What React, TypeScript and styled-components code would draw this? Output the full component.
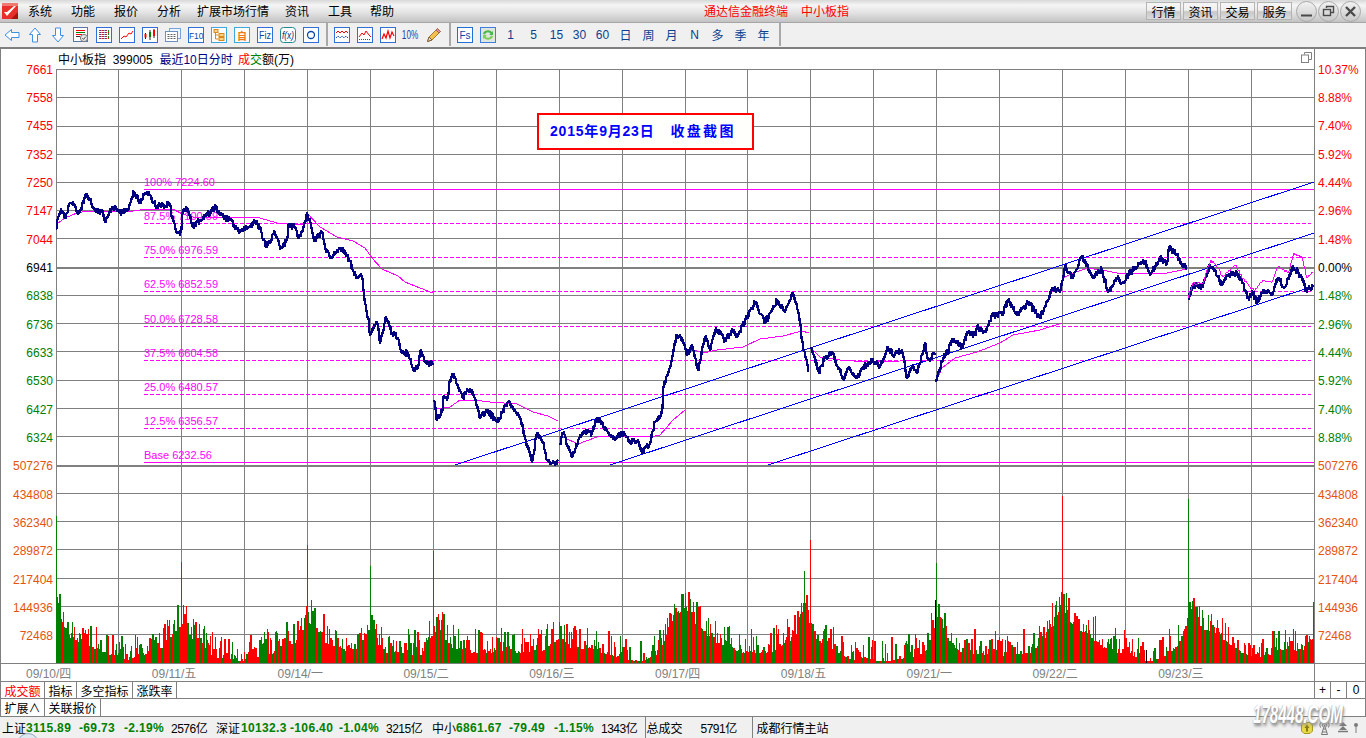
import React from "react";
import styled, { createGlobalStyle } from "styled-components";

const SANS = `"Liberation Sans", "Noto Sans CJK SC", sans-serif`;
const LINE = "#808080";
const RED = "#ff0000";
const GREEN = "#008000";
const ORANGE = "#e4540f";
const NAVY = "#000080";
const MAGENTA = "#ff00ff";

const Global = createGlobalStyle`
  html, body { margin: 0; padding: 0; background: #fff; }
  * { box-sizing: border-box; }
`;

const Screen = styled.div`
  position: relative;
  width: 1366px;
  height: 738px;
  overflow: hidden;
  font: 12px ${SANS};
  color: #000;
  background: #fff;
  display: flex;
  flex-direction: column;
`;

/* ---------- menu bar ---------- */
const MenuBar = styled.div`
  height: 23px;
  display: flex;
  align-items: center;
  padding-left: 2px;
  background: linear-gradient(#d8d8d8 0, #f5f5f5 5px, #e2e2e2 13px, #c2c2c2 22px);
  border-bottom: 1px solid #a6a6a6;
`;
const LogoSvg = styled.svg`
  width: 16px;
  height: 16px;
  flex: none;
  margin-right: 10px;
`;
const MenuItem = styled.span<{ $gap: number }>`
  margin-left: ${(p) => p.$gap}px;
  margin-bottom: 2px;
  white-space: nowrap;
`;
const AppTitle = styled.div`
  position: absolute;
  left: 704px;
  top: 2px;
  color: ${RED};
  display: flex;
  gap: 13px;
`;
const WindowControls = styled.div`
  margin-left: auto;
  display: flex;
  align-items: center;
  gap: 2px;
  padding-right: 5px;
`;
const TopButton = styled.span`
  width: 35px;
  height: 18px;
  display: flex;
  align-items: center;
  justify-content: center;
  border: 1px solid #b4b4b4;
  background: linear-gradient(#f6f6f6, #f0f0f0 45%, #c8c8c8 55%, #dcdcdc);
`;
const RoundButton = styled.span<{ $first?: boolean }>`
  width: 21px;
  height: 21px;
  margin-left: ${(p) => (p.$first ? 2 : -1)}px;
  border-radius: 50%;
  border: 1px solid #a8a8a8;
  background: linear-gradient(#f2f2f2, #c8c8c8);
  display: flex;
  align-items: center;
  justify-content: center;
`;

/* ---------- tool bar ---------- */
const ToolBar = styled.div`
  height: 26px;
  display: flex;
  align-items: center;
  background: #f0f0f0;
  border-bottom: 2px solid ${LINE};
  padding-bottom: 1px;
`;
const ToolCell = styled.span`
  width: 23px;
  height: 16px;
  flex: none;
  display: flex;
  align-items: center;
  justify-content: center;
`;
const ToolIcon = styled.svg`
  width: 16px;
  height: 16px;
  display: block;
`;
const ToolWord = styled.span`
  display: block;
  flex: none;
  color: #1346b4;
  font-size: 12px;
  transform: scaleX(0.68);
`;
const ToolSep = styled.span`
  width: 2px;
  height: 23px;
  flex: none;
  margin: 0 2px 0 4px;
  background: #a8a8a8;
`;
const Period = styled.span`
  width: 23px;
  flex: none;
  text-align: center;
  color: #0b3f8f;
`;

/* ---------- chart panel ---------- */
const ChartPanel = styled.div`
  display: grid;
  grid-template-columns: 55px 1259px 50px;
  grid-template-rows: 20px 594px;
  border-left: 1px solid ${LINE};
  border-right: 1px solid ${LINE};
`;
const Axis = styled.div<{ $side: "left" | "right" }>`
  grid-row: 1 / 3;
  padding-top: 6.83px;
  display: flex;
  flex-direction: column;
  align-items: ${(p) => (p.$side === "left" ? "flex-end" : "flex-start")};
  padding-left: ${(p) => (p.$side === "left" ? 0 : 3)}px;
  padding-right: ${(p) => (p.$side === "left" ? 3 : 0)}px;
`;
const AxisLabel = styled.span<{ $color: string }>`
  height: 28.33px;
  line-height: 28.33px;
  flex: none;
  color: ${(p) => p.$color};
  white-space: nowrap;
`;
const TitleRow = styled.div`
  grid-column: 2;
  grid-row: 1;
  display: flex;
  align-items: center;
  padding: 0 2px 1px;
  white-space: pre;
  border-right: 1px solid ${LINE};
`;
const Tint = styled.span<{ $color: string; $gap?: number }>`
  color: ${(p) => p.$color};
  margin-left: ${(p) => p.$gap ?? 0}px;
`;
const RestoreIcon = styled.svg`
  width: 11px;
  height: 11px;
  margin-left: auto;
  margin-bottom: 3px;
`;
const Plot = styled.svg`
  grid-column: 2;
  grid-row: 2;
  display: block;
  width: 1259px;
  height: 594px;
`;
const PlotLabel = styled.text`
  font: 11px ${SANS};
  fill: ${MAGENTA};
`;
const Notice = styled.div`
  position: absolute;
  left: 537px;
  top: 113px;
  width: 217px;
  height: 37px;
  border: 2px solid ${RED};
  background: #fffffc;
  color: #0000ff;
  font-weight: 700;
  font-size: 14px;
  display: flex;
  align-items: center;
  padding: 0 0 3px 11px;
  white-space: nowrap;
`;
const NoticeDate = styled.span`
  letter-spacing: 0.8px;
`;
const NoticeWords = styled.span`
  margin-left: 16px;
  letter-spacing: 2.3px;
`;

/* ---------- lower rows ---------- */
const DateRow = styled.div`
  height: 19px;
  display: flex;
  border-top: 1px solid ${LINE};
  border-bottom: 1px solid ${LINE};
  border-left: 1px solid ${LINE};
  border-right: 1px solid ${LINE};
`;
const DateTrack = styled.div`
  width: 1313px;
  flex: none;
  display: flex;
  align-items: center;
  padding: 0 0 1px 25px;
  overflow: hidden;
`;
const DateLabel = styled.span`
  width: 125.8px;
  flex: none;
  color: ${LINE};
  white-space: nowrap;
`;
const RightCell = styled.div`
  flex: 1;
  border-left: 1px solid ${LINE};
`;
const TabRow = styled.div<{ $h: number }>`
  height: ${(p) => p.$h}px;
  display: flex;
  border-left: 1px solid ${LINE};
  border-right: 1px solid ${LINE};
  border-bottom: 1px solid ${LINE};
`;
const Tab = styled.span<{ $w: number; $on?: boolean }>`
  width: ${(p) => p.$w}px;
  flex: none;
  display: flex;
  align-items: center;
  justify-content: center;
  border-right: 1px solid ${LINE};
  color: ${(p) => (p.$on ? RED : "#000")};
`;
const ZoomGroup = styled.div`
  margin-left: auto;
  display: flex;
  border-left: 1px solid ${LINE};
`;
const ZoomCell = styled.span<{ $w: number; $last?: boolean }>`
  width: ${(p) => p.$w}px;
  display: flex;
  align-items: center;
  justify-content: center;
  border-right: ${(p) => (p.$last ? "none" : `1px solid ${LINE}`)};
`;

/* ---------- status bar ---------- */
const StatusBar = styled.div`
  position: relative;
  height: 21px;
  display: flex;
  align-items: center;
  padding-left: 2px;
  padding-right: 8px;
  background: #f0f0f0;
  overflow: hidden;
  white-space: nowrap;
`;
const StatusCell = styled.span<{ $w: number; $kind?: "num" | "vol"; $pad?: number }>`
  width: ${(p) => p.$w}px;
  flex: none;
  padding-left: ${(p) => p.$pad ?? 0}px;
  color: ${(p) => (p.$kind === "num" ? GREEN : "#000")};
  font-weight: ${(p) => (p.$kind === "num" ? 700 : 400)};
  letter-spacing: ${(p) => (p.$kind === "num" ? "0.35px" : p.$kind === "vol" ? "-0.5px" : "0")};
`;
const StatusSep = styled.span`
  width: 1px;
  height: 21px;
  flex: none;
  background: ${LINE};
`;
const StatusIcons = styled.div`
  margin-left: auto;
  display: flex;
  align-items: center;
`;
const StatusIcon = styled.svg<{ $gap: number }>`
  display: block;
  margin-left: ${(p) => p.$gap}px;
`;
const Dome = styled.span`
  position: absolute;
  left: 17px;
  top: 16px;
  width: 22px;
  height: 22px;
  border-radius: 50%;
  border: 1px solid #8fa6c4;
  background: #dfe7f1;
`;
const Watermark = styled.div`
  position: absolute;
  left: 1253px;
  top: 699px;
  font: italic 700 26px "Liberation Sans", sans-serif;
  color: #fff;
  transform-origin: 0 0;
  transform: scaleX(0.58);
  white-space: nowrap;
  text-shadow: 1px 1px 1px #9a9a9a, 2px 3px 4px #8a8a8a, -1px 0 1px #c8c8c8;
`;

/* ---------- data ---------- */
const LEFT = [
  ["7661", RED], ["7558", RED], ["7455", RED], ["7352", RED], ["7250", RED], ["7147", RED], ["7044", RED],
  ["6941", "#000"], ["6838", GREEN], ["6736", GREEN], ["6633", GREEN], ["6530", GREEN], ["6427", GREEN], ["6324", GREEN],
  ["507276", ORANGE], ["434808", ORANGE], ["362340", ORANGE], ["289872", ORANGE], ["217404", ORANGE], ["144936", ORANGE], ["72468", ORANGE],
];
const RIGHT = [
  ["10.37%", RED], ["8.88%", RED], ["7.40%", RED], ["5.92%", RED], ["4.44%", RED], ["2.96%", RED], ["1.48%", RED],
  ["0.00%", "#000"], ["1.48%", GREEN], ["2.96%", GREEN], ["4.44%", GREEN], ["5.92%", GREEN], ["7.40%", GREEN], ["8.88%", GREEN],
  ["507276", ORANGE], ["434808", ORANGE], ["362340", ORANGE], ["289872", ORANGE], ["217404", ORANGE], ["144936", ORANGE], ["72468", ORANGE],
];
const H_LINES = [69, 97, 126, 154, 182, 210, 238, 295, 323, 351, 380, 408, 436, 493, 521, 549, 578, 606, 634];
const V_LINES = [56, 118, 181, 244, 307, 370, 433, 496, 559, 622, 685, 747, 810, 873, 936, 999, 1062, 1125, 1188, 1251, 1314];
const FIB = [
  ["100% 7224.60", 189, true], ["87.5% 7100.59", 223, false], ["75.0% 6976.59", 257, false], ["62.5% 6852.59", 291, false],
  ["50.0% 6728.58", 326, false], ["37.5% 6604.58", 360, false], ["25.0% 6480.57", 394, false], ["12.5% 6356.57", 428, false],
  ["Base 6232.56", 462, true],
] as const;

type P = [number, number];
const NAVY_SEGS: P[][] = [
  [[56,230],[57,220],[60,212],[63,212],[65,218],[70,203],[75,205],[77,212],[80,212],[86,194],[90,200],[93,208],[97,212],[102,210],[105,222],[109,213],[115,206],[120,213],[127,211],[130,203],[134,192],[140,202],[145,193],[150,195],[154,203],[157,207],[163,205],[170,204],[172,218],[177,233],[181,232],[183,210],[188,210],[193,227],[200,220],[207,215],[216,206],[220,215],[230,220],[240,232],[248,227],[255,222],[260,227],[266,247],[275,233],[281,248],[287,240],[288,225],[295,227],[298,238],[303,230],[307,213],[312,230],[314,241],[322,233],[325,247],[330,258],[340,248],[347,255],[353,270],[357,278],[362,277],[365,303],[368,317],[370,335],[377,322],[380,343],[386,317],[392,333],[398,338],[402,353],[408,353],[413,369],[418,367],[421,350],[425,362],[433,365]],
  [[434,400],[437,420],[442,412],[443,397],[448,397],[450,380],[453,375],[457,385],[463,398],[468,390],[473,393],[480,418],[487,410],[497,422],[508,402],[520,418],[525,438],[532,462],[537,433],[543,443],[547,460],[555,465],[558,460]],
  [[560,445],[563,433],[572,457],[582,433],[592,433],[597,418],[607,430],[615,440],[622,432],[630,442],[638,440],[642,453],[650,443],[655,422],[662,413],[663,387],[670,367],[677,335],[682,338],[687,355],[692,345],[698,370],[705,337],[710,350],[716,328],[725,340],[733,330],[737,337],[747,317],[755,302],[765,323],[777,300],[785,312],[793,293],[798,310],[802,340],[804,350],[809,372]],
  [[811,347],[819,373],[825,357],[833,353],[837,365],[844,380],[848,368],[857,378],[863,367],[872,360],[880,367],[888,347],[893,355],[898,352],[902,350],[907,378],[913,365],[917,373],[925,343],[928,360],[935,355]],
  [[936,382],[942,362],[953,340],[962,347],[968,332],[975,335],[977,327],[985,332],[992,315],[1002,315],[1008,300],[1018,315],[1028,302],[1040,318],[1047,302],[1052,288],[1060,292],[1065,267],[1073,278],[1082,256],[1092,277],[1102,270],[1108,292],[1117,278],[1122,283],[1135,267],[1145,262],[1150,275],[1160,258],[1167,263],[1169,247],[1177,255],[1182,265],[1187,267]],
  [[1188,300],[1193,285],[1202,287],[1210,265],[1215,270],[1222,285],[1228,275],[1237,273],[1243,283],[1248,298],[1253,293],[1257,303],[1263,290],[1272,295],[1278,278],[1285,287],[1293,266],[1302,277],[1306,290],[1313,287]],
];
const MAG_SEGS: P[][] = [
  [[56,230],[58,223],[65,218],[77,213],[88,211],[133,211],[147,209],[173,209],[182,214],[197,218],[213,217],[230,217],[260,218],[277,223],[303,225]],
  [[307,213],[320,227],[337,237],[353,241],[365,248],[372,258],[382,269],[398,276],[405,282],[420,288],[433,293]],
  [[433,410],[437,409],[450,407],[460,400],[473,400],[490,402],[517,404],[533,412],[548,416],[558,421]],
  [[559,436],[565,438],[578,444],[597,437],[617,436],[650,437],[660,435],[673,420],[685,410]],
  [[685,357],[690,350],[697,351],[703,353],[717,350],[743,347],[760,339],[783,336],[802,331],[809,333]],
  [[810,347],[820,357],[840,360],[867,362],[900,361],[933,360]],
  [[936,382],[942,368],[955,358],[977,352],[1000,343],[1013,335],[1040,330],[1062,323]],
  [[1063,278],[1073,273],[1088,268],[1107,271],[1117,273],[1167,273],[1187,269]],
];
const MAG_LAST: P[] = [[1188,298],[1193,283],[1203,283],[1211,260],[1217,267],[1223,277],[1235,265],[1243,278],[1250,287],[1255,290],[1263,280],[1272,282],[1278,267],[1288,273],[1294,253],[1302,258],[1307,278],[1313,272]];

const rng = (seed: number) => () => {
  seed = (seed + 0x6d2b79f5) | 0;
  let t = Math.imul(seed ^ (seed >>> 15), 1 | seed);
  t = (t + Math.imul(t ^ (t >>> 7), 61 | t)) ^ t;
  return ((t ^ (t >>> 14)) >>> 0) / 4294967296;
};

const jag = (pts: P[], amp: number, seed: number, perPx: number) => {
  const r = rng(seed);
  const out: string[] = [];
  for (let i = 0; i < pts.length - 1; i++) {
    const [x0, y0] = pts[i];
    const [x1, y1] = pts[i + 1];
    const n = Math.max(1, Math.round((x1 - x0) * perPx));
    for (let k = 0; k < n; k++) {
      const x = x0 + ((x1 - x0) * k) / n;
      const y = y0 + ((y1 - y0) * k) / n + (k === 0 ? 0 : (r() - 0.5) * amp);
      out.push(`${Math.round(x)},${Math.round(y)}`);
    }
  }
  const e = pts[pts.length - 1];
  out.push(`${e[0]},${e[1]}`);
  return out.join(" ");
};
const straight = (pts: P[]) => pts.map((p) => p.join(",")).join(" ");

const ENV: P[] = [[56,600],[70,625],[90,635],[110,642],[125,648],[135,645],[150,640],[165,635],[175,618],[181,612],[190,625],[200,635],[215,645],[240,650],[255,645],[275,640],[295,630],[305,612],[312,610],[325,630],[345,640],[360,635],[368,622],[372,625],[385,640],[405,640],[420,645],[433,620],[438,618],[450,635],[470,640],[496,640],[540,640],[559,625],[575,640],[600,640],[640,650],[660,640],[670,610],[685,595],[695,612],[715,630],[740,640],[770,640],[795,625],[803,600],[815,625],[840,645],[880,650],[910,645],[925,640],[936,610],[945,625],[960,640],[1000,643],[1030,640],[1045,625],[1055,610],[1062,585],[1066,605],[1075,615],[1090,625],[1110,640],[1125,640],[1150,650],[1170,640],[1180,630],[1186,610],[1190,600],[1200,615],[1220,625],[1240,640],[1260,645],[1275,640],[1290,635],[1300,640],[1313,625]];
const envAt = (x: number) => {
  for (let i = 0; i < ENV.length - 1; i++) {
    if (x <= ENV[i + 1][0]) {
      const t = (x - ENV[i][0]) / (ENV[i + 1][0] - ENV[i][0]);
      return ENV[i][1] + (ENV[i + 1][1] - ENV[i][1]) * t;
    }
  }
  return 640;
};
type Bar = { x: number; w: number; top: number; c: string };
const BARS: Bar[] = (() => {
  const r = rng(20150923);
  const bars: Bar[] = [];
  let x = 56;
  while (x < 1314) {
    const w = Math.min(r() < 0.75 ? 1 : 2, 1314 - x);
    const rise = Math.pow(r(), 2) * 26;
    const top = Math.min(661, Math.round(envAt(x) + 13 - rise));
    bars.push({ x, w, top, c: r() < 0.62 ? RED : GREEN });
    x += w;
  }
  const spikes: [number, number, string][] = [
    [56,516,GREEN],[181,562,RED],[307,545,RED],[370,566,GREEN],[433,551,GREEN],[559,622,GREEN],[685,593,RED],
    [804,571,GREEN],[810,540,RED],[936,563,GREEN],[1062,496,RED],[1188,499,GREEN],[1313,602,GREEN],[935,600,"#000"],[1146,650,"#000"],
  ];
  spikes.forEach(([sx, top, c]) => bars.push({ x: sx, w: 1, top, c }));
  return bars;
})();

const NAVY_PATHS = NAVY_SEGS.map((s, i) => jag(s, 6, 11 + i, 1.6));
const MAG_LAST_PATH = jag(MAG_LAST, 3, 77, 1);

/* ---------- drawings ---------- */
const F = { blue: "#2f6fd6", ink: "#0a46a8", arrow: "#3f8fe4" };
const Frame = ({ c = F.blue }: { c?: string }) => <rect x=".5" y=".5" width="15" height="15" fill="#fff" stroke={c} />;
const tt = { fontFamily: "Liberation Sans, sans-serif", fontSize: 10 };

const ICONS: React.ReactNode[] = [
  <path key="l" d="M1 8 7.5 2.5V5.5H15v5H7.5v3z" fill="#fff" stroke={F.arrow} />,
  <path key="u" d="M8 1 13.5 7.5H10.5V15h-5V7.5H2.5z" fill="#fff" stroke={F.arrow} />,
  <path key="d" d="M8 15 13.5 8.5H10.5V1h-5V8.5H2.5z" fill="#fff" stroke={F.arrow} />,
  <g key="rp"><rect x=".5" y=".5" width="14" height="14" fill="#fff" stroke="#5577aa" /><path d="M3 3.5h9" stroke={RED} /><path d="M3 5.5h9" stroke={GREEN} /><path d="M3 7.5h6" stroke={RED} /><path d="M3 9.5h4" stroke="#333" /><circle cx="11" cy="11" r="3.6" fill="#e8e8e8" stroke="#777" /><path d="M9.3 11l1.3 1.4 2-2.6" fill="none" stroke="#555" /></g>,
  <g key="gr"><Frame /><path d="M3 3.5h10M3 5.5h10M3 7.5h10M3 9.5h10M3 11.5h10" stroke="#c22" strokeDasharray="2 1" /><path d="M5 3v9M9 3v9" stroke="#1144cc" strokeDasharray="1 1" /><path d="M12.5 3v9" stroke="#1a8a1a" strokeDasharray="2 1" /></g>,
  <g key="ln"><Frame /><path d="M2 12 5 9 7 10 10 6 12 7 14 4" fill="none" stroke={RED} /></g>,
  <g key="cd"><Frame /><path d="M3.5 6v6M8 3v10M12 2v9" stroke="#222" /><rect x="2.5" y="7" width="2" height="3.5" fill={RED} /><rect x="7" y="5" width="2" height="5" fill={GREEN} /><rect x="11" y="3" width="2" height="6" fill={RED} /></g>,
  <g key="wn"><rect x="4.5" y="1.5" width="11" height="10" fill="#eef4fb" stroke="#7aa3d8" /><rect x=".5" y="4.5" width="12" height="10" fill="#fff" stroke="#6b8fbf" /><path d="M2.5 7.5h8M2.5 9.5h8M2.5 11.5h8" stroke="#666" strokeDasharray="2 1" /></g>,
  <g key="f10"><Frame /><text x=".9" y="11.5" style={{ ...tt, fontSize: 8.4, fill: F.ink }}>F10</text></g>,
  <g key="tr"><Frame c="#3fa6e0" /><rect x="3" y="2.5" width="4" height="3" fill="#fbd38a" stroke="#d98a1a" /><rect x="8" y="6.5" width="5" height="3" fill="#fbd38a" stroke="#d98a1a" /><rect x="8" y="10.5" width="5" height="3" fill="#fbd38a" stroke="#d98a1a" /><path d="M4.5 6v6h3M4.5 8h3" fill="none" stroke="#d98a1a" /></g>,
  <g key="zx"><Frame c="#3fa6e0" /><text x="3" y="12.5" style={{ fontFamily: "Noto Sans CJK SC, sans-serif", fontSize: 10, fill: "#ee7a1c", fontWeight: 700 }}>自</text></g>,
  <g key="fiz"><Frame /><text x="2" y="12" textLength="12" lengthAdjust="spacingAndGlyphs" style={{ ...tt, fill: F.ink }}>Fiz</text></g>,
  <g key="fx"><rect x=".5" y=".5" width="15" height="15" rx="3" fill="#fff" stroke="#1e8a8a" /><text x="2" y="12" textLength="12" lengthAdjust="spacingAndGlyphs" style={{ ...tt, fill: "#0a2f7c", fontStyle: "italic" }}>f(x)</text></g>,
  <g key="o"><Frame /><circle cx="8" cy="8" r="3.5" fill="none" stroke={F.ink} strokeWidth="1.3" /></g>,
];
const ICONS2: React.ReactNode[] = [
  <g key="w"><Frame /><path d="M2 6l2-2 2 2 2-2 2 2 2-2 2 2" fill="none" stroke={RED} /><path d="M2 11l2-2 2 2 2-2 2 2 2-2 2 2" fill="none" stroke="#1144cc" strokeDasharray="2 1" /></g>,
  <g key="m"><Frame /><path d="M2 10 5 6l2 2 2-4 3 4 2 2" fill="none" stroke={RED} /><path d="M2 12.5h12" stroke={RED} strokeDasharray="1 1" /></g>,
  <g key="z"><Frame /><path d="M2 12 4 7l2 4 2-7 2 7 2-6 2 4" fill="none" stroke={RED} strokeWidth="1.2" /></g>,
];
const Pencil = () => (
  <ToolIcon viewBox="0 0 16 16"><path d="M11.5 1.5 14.5 4.5 6 13 1.5 14.5 3 10z" fill="#f1c04e" stroke="#a67c2a" /><path d="M11.5 1.5 14.5 4.5 13 6 10 3z" fill="#e89090" stroke="#a06060" /><path d="M1.5 14.5 3 10 6 13z" fill="#eadcc0" stroke="#806040" /></ToolIcon>
);

const MENUS: [string, number][] = [["系统", 0], ["功能", 19], ["报价", 19], ["分析", 19], ["扩展市场行情", 16], ["资讯", 16], ["工具", 19], ["帮助", 18]];
const PERIODS = ["1", "5", "15", "30", "60", "日", "周", "月", "N", "多", "季", "年"];
const DATES = ["09/10/四", "09/11/五", "09/14/一", "09/15/二", "09/16/三", "09/17/四", "09/18/五", "09/21/一", "09/22/二", "09/23/三"];
const STATUS: [string, number, ("num" | "vol")?][] = [
  ["上证", 24], ["3115.89", 53, "num"], ["-69.73", 45, "num"], ["-2.19%", 47, "num"], ["2576亿", 45, "vol"],
  ["深证", 25], ["10132.3", 49, "num"], ["-106.40", 49, "num"], ["-1.04%", 47, "num"], ["3215亿", 46, "vol"],
  ["中小", 24], ["6861.67", 53, "num"], ["-79.49", 45, "num"], ["-1.15%", 47, "num"], ["1343亿", 43.5, "vol"],
];

export default function App() {
  return (
    <Screen>
      <Global />
      <MenuBar>
        <LogoSvg viewBox="0 0 16 16">
          <rect width="16" height="16" fill="#e8302a" />
          <path d="M0 0h16v3H0z" fill="#f07a70" />
          <path d="M2 9l3 4 9-10-2 0-7 6z" fill="#fff" />
          <path d="M9 16l7-7v7z" fill="#a81410" />
        </LogoSvg>
        {MENUS.map(([m, g]) => (
          <MenuItem key={m} $gap={g}>{m}</MenuItem>
        ))}
        <AppTitle>
          <span>通达信金融终端</span>
          <span>中小板指</span>
        </AppTitle>
        <WindowControls>
          {["行情", "资讯", "交易", "服务"].map((t) => (
            <TopButton key={t}>{t}</TopButton>
          ))}
          <RoundButton $first>
            <svg width="13" height="13" viewBox="0 0 13 13"><path d="M1 10.5h11" stroke="#4a4a4a" strokeWidth="2" /></svg>
          </RoundButton>
          <RoundButton>
            <svg width="13" height="13" viewBox="0 0 13 13"><path d="M4.5 3V1.5h7v6H9" fill="none" stroke="#4a4a4a" strokeWidth="1.4" /><rect x="1.5" y="4.5" width="7" height="6" fill="none" stroke="#4a4a4a" strokeWidth="1.4" /></svg>
          </RoundButton>
          <RoundButton>
            <svg width="13" height="13" viewBox="0 0 13 13"><path d="M2 2l9 9M11 2l-9 9" stroke="#4a4a4a" strokeWidth="2.4" /></svg>
          </RoundButton>
        </WindowControls>
      </MenuBar>

      <ToolBar>
        {ICONS.map((ic, i) => (
          <ToolCell key={i}><ToolIcon viewBox="0 0 16 16">{ic}</ToolIcon></ToolCell>
        ))}
        <ToolSep />
        {ICONS2.map((ic, i) => (
          <ToolCell key={i}><ToolIcon viewBox="0 0 16 16">{ic}</ToolIcon></ToolCell>
        ))}
        <ToolCell><ToolWord>10%</ToolWord></ToolCell>
        <ToolCell><Pencil /></ToolCell>
        <ToolSep />
        <ToolCell><ToolIcon viewBox="0 0 16 16"><Frame c="#1f6fd6" /><text x="2.5" y="12" style={{ ...tt, fill: F.ink }}>Fs</text></ToolIcon></ToolCell>
        <ToolCell>
          <ToolIcon viewBox="0 0 16 16">
            <rect x=".5" y=".5" width="15" height="15" fill="#dfe6df" stroke="#3f7fe0" />
            <path d="M3 7a5 4 0 0 1 9-2l1-1v4H9l1.5-1.2A3 3 0 0 0 5 7.5z" fill="#4cb84c" />
            <path d="M13 9a5 4 0 0 1-9 2l-1 1V8h4L5.5 9.2A3 3 0 0 0 11 8.5z" fill="#7ccf5c" />
          </ToolIcon>
        </ToolCell>
        {PERIODS.map((p) => (
          <Period key={p}>{p}</Period>
        ))}
        <ToolSep />
      </ToolBar>

      <ChartPanel>
        <Axis $side="left">
          {LEFT.map(([t, c], i) => (
            <AxisLabel key={i} $color={c}>{t}</AxisLabel>
          ))}
        </Axis>
        <TitleRow>
          <span>中小板指  399005  </span>
          <Tint $color={NAVY}>最近10日分时 </Tint>
          <Tint $color={RED} $gap={2}>成</Tint>
          <Tint $color={GREEN}>交</Tint>
          <span>额(万)</span>
          <RestoreIcon viewBox="0 0 11 11">
            <path d="M3.5 2.5V.5h7v7H8" fill="none" stroke="#808080" />
            <rect x=".5" y="3" width="7" height="7.5" fill="none" stroke="#808080" />
          </RestoreIcon>
        </TitleRow>
        <Plot viewBox="56 69 1259 594">
          <g shapeRendering="crispEdges">
            {H_LINES.map((y) => (
              <line key={y} x1="56" x2="1315" y1={y + 0.5} y2={y + 0.5} stroke={LINE} />
            ))}
            <rect x="56" y="267" width="1259" height="2" fill={LINE} />
            <rect x="56" y="465" width="1259" height="2" fill={LINE} />
            {V_LINES.map((x) => (
              <line key={x} x1={x + 0.5} x2={x + 0.5} y1="69" y2="663" stroke={LINE} />
            ))}
            {BARS.map((b, i) => (
              <rect key={i} x={b.x} y={b.top} width={b.w} height={663 - b.top} fill={b.c} />
            ))}
            {FIB.map(([t, y, solid]) => (
              <line key={t} x1="144" x2={solid ? 1314 : 1311} y1={y + 0.5} y2={y + 0.5} stroke={MAGENTA} strokeDasharray={solid ? undefined : "4 2"} />
            ))}
          </g>
          {FIB.map(([t, y]) => (
            <PlotLabel key={t} x="144" y={y - 3}>{t}</PlotLabel>
          ))}
          <g shapeRendering="crispEdges" fill="none">
            <line x1="455" y1="465" x2="1314" y2="182" stroke="#0000ff" />
            <line x1="610" y1="465" x2="1314" y2="233" stroke="#0000ff" />
            <line x1="768" y1="465" x2="1314" y2="286" stroke="#0000ff" />
            {MAG_SEGS.map((s, i) => (
              <polyline key={i} points={straight(s)} stroke={MAGENTA} />
            ))}
            {NAVY_PATHS.map((d, i) => (
              <polyline key={i} points={d} stroke={NAVY} strokeWidth="2.4" strokeLinejoin="round" />
            ))}
            <polyline points={MAG_LAST_PATH} stroke={MAGENTA} />
          </g>
        </Plot>
        <Axis $side="right">
          {RIGHT.map(([t, c], i) => (
            <AxisLabel key={i} $color={c}>{t}</AxisLabel>
          ))}
        </Axis>
      </ChartPanel>

      <DateRow>
        <DateTrack>
          {DATES.map((d) => (
            <DateLabel key={d}>{d}</DateLabel>
          ))}
        </DateTrack>
        <RightCell />
      </DateRow>
      <TabRow $h={17}>
        <Tab $w={44} $on>成交额</Tab>
        <Tab $w={32}>指标</Tab>
        <Tab $w={56}>多空指标</Tab>
        <Tab $w={44}>涨跌率</Tab>
        <ZoomGroup>
          <ZoomCell $w={16}>+</ZoomCell>
          <ZoomCell $w={16}>-</ZoomCell>
          <ZoomCell $w={18} $last>0</ZoomCell>
        </ZoomGroup>
      </TabRow>
      <TabRow $h={18}>
        <Tab $w={44}>扩展∧</Tab>
        <Tab $w={56}>关联报价</Tab>
      </TabRow>

      <StatusBar>
        {STATUS.map(([t, w, k], i) => (
          <StatusCell key={i} $w={w} $kind={k}>{t}</StatusCell>
        ))}
        <StatusSep />
        <StatusCell $w={55} $pad={1}>总成交</StatusCell>
        <StatusCell $w={51} $kind="vol">5791亿</StatusCell>
        <StatusSep />
        <StatusCell $w={90} $pad={4}>成都行情主站</StatusCell>
        <Dome />
        <StatusIcons>
          <StatusIcon $gap={0} width="12" height="12" viewBox="0 0 12 12">
            <path d="M3 .5h6L11.5 3v6L9 11.5H3L.5 9V3z" fill="#e6d84a" stroke="#a89a20" />
            <path d="M6 2.5 8.5 6H7v3.5H5V6H3.5z" fill="#8a7a10" />
          </StatusIcon>
          <StatusIcon $gap={6} width="11" height="14" viewBox="0 0 11 14">
            <path d="M5.5 4 2.5 13.5h6zM3 11h5M4 8h3" fill="none" stroke="#777" />
            <path d="M1.5 1.5a5 5 0 0 0 0 5M9.5 1.5a5 5 0 0 1 0 5M3.5 3a3 3 0 0 0 0 2.5M7.5 3a3 3 0 0 1 0 2.5" fill="none" stroke="#777" />
          </StatusIcon>
          <StatusIcon $gap={8} width="10" height="11" viewBox="0 0 10 11">
            <path d="M5 0 9 4H1zM5 4 9 8H1z" fill="#7a7a7a" /><path d="M0 9.5h10" stroke="#7a7a7a" strokeWidth="1.5" />
          </StatusIcon>
          <StatusIcon $gap={6} width="4" height="10" viewBox="0 0 4 10">
            <circle cx="2" cy="2" r="2" fill="#7a7a7a" /><path d="M2 4v6" stroke="#7a7a7a" />
          </StatusIcon>
        </StatusIcons>
      </StatusBar>

      <Notice>
        <NoticeDate>2015年9月23日</NoticeDate>
        <NoticeWords>收盘截图</NoticeWords>
      </Notice>
      <Watermark>178448.COM</Watermark>
    </Screen>
  );
}
